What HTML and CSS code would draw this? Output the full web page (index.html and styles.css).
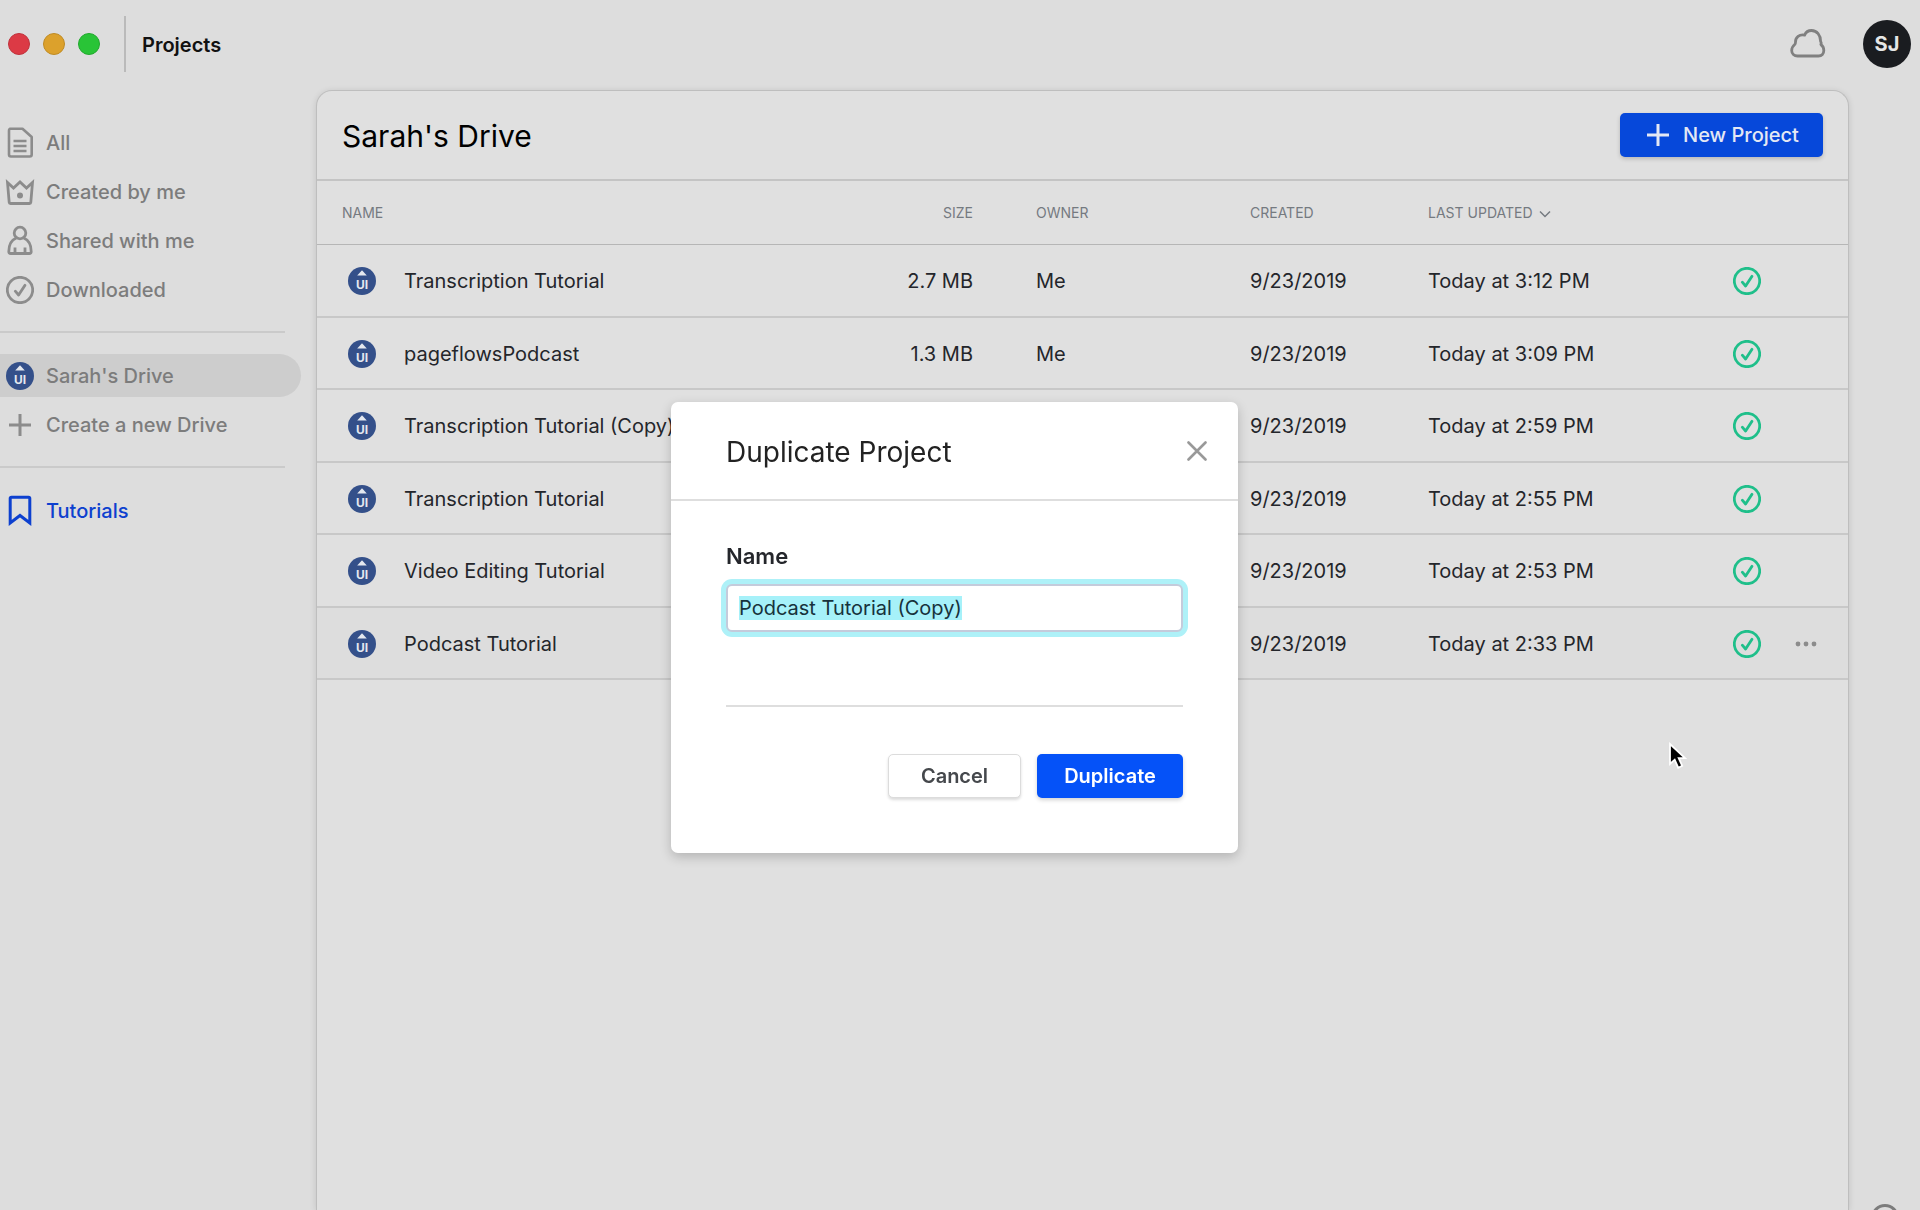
FILE: index.html
```html
<!DOCTYPE html>
<html lang="en">
<head>
<meta charset="utf-8">
<title>Projects</title>
<meta name="viewport" content="width=device-width, initial-scale=1">
<link rel="stylesheet" href="styles.css">
</head>
<body>
<svg class="sprite" aria-hidden="true">
  <symbol id="logo" viewBox="0 0 28 28">
    <circle cx="14" cy="14" r="14" fill="#34508a"/>
    <path d="M14 3.2 18.8 8.600H9.200z" fill="#e4e8ef"/>
    <text x="14" y="21.500" text-anchor="middle" class="logo-text">UI</text>
  </symbol>
  <symbol id="check" viewBox="0 0 28 28">
    <circle cx="14" cy="14" r="12.700" fill="none" stroke="currentColor" stroke-width="2.800"/>
    <path d="M9.300 15.200 12.600 19 19 9.300" fill="none" stroke="currentColor" stroke-width="2.800" stroke-linecap="round" stroke-linejoin="round"/>
  </symbol>
  <symbol id="plus" viewBox="0 0 28 28">
    <path d="M14 3v22M3 14h22" fill="none" stroke="currentColor" stroke-width="3"/>
  </symbol>
</svg>

<header class="topbar">
  <div class="lights">
    <span class="light red"></span><span class="light amber"></span><span class="light green"></span>
  </div>
  <h1 class="crumb">Projects</h1>
  <svg class="cloud" viewBox="0 0 36 30" aria-hidden="true"><path d="M7.500 27h21c3.300 0 5.300-2.300 5.300-5.500 0-2.600-1-4.600-2.900-6 .5-1 .4-2.200-.3-3.300C30.600 6 27 1.500 21.500 1.500c-3.200 0-5.700 1.700-6.900 4.600C9.500 5 5.300 8.500 5.500 13c0 1-.1 1.700-.6 2.300C2.900 17 1.700 18.900 1.700 21.500 1.700 24.700 4.200 27 7.500 27z" fill="none" stroke="currentColor" stroke-width="2.800" stroke-linejoin="round"/></svg>
  <button class="avatar" type="button">SJ</button>
</header>

<div class="layout">
  <nav class="sidebar">
    <a class="item" href="#"><svg class="icon" viewBox="0 0 28 28"><path d="M4 -.3h12.500L25.700 8v17.500q0 2-2 2H5q-2 0-2-2V1.700q0-2 2-2zM7.500 12h13M7.500 17h13M7.500 22h13" fill="none" stroke="currentColor" stroke-width="2.600" stroke-linejoin="round"/></svg>All</a>
    <a class="item" href="#"><svg class="icon" viewBox="0 0 28 28"><path d="M1.500 4.500 3.200 24.300q.1 1.200 1.300 1.200h19q1.200 0 1.300-1.200L26.500 4.500l-6 5.500L14 4l-6.500 6z" fill="none" stroke="currentColor" stroke-width="2.800"/><circle cx="14" cy="17.500" r="3" fill="currentColor"/></svg>Created by me</a>
    <a class="item" href="#"><svg class="icon" viewBox="0 0 28 28"><circle cx="14" cy="6" r="5.800" fill="none" stroke="currentColor" stroke-width="2.800"/><path d="M10.300 11C5.500 13 2.800 17 2.800 24.500q0 2 2 2h18.400q2 0 2-2c0-7.500-2.700-11.500-7.500-13.500M9 26.500v-6M19 26.500v-6" fill="none" stroke="currentColor" stroke-width="2.800"/></svg>Shared with me</a>
    <a class="item" href="#"><svg class="icon"><use href="#check"/></svg>Downloaded</a>
    <hr class="rule">
    <a class="item active" href="#"><svg class="icon"><use href="#logo"/></svg>Sarah's Drive</a>
    <a class="item" href="#"><svg class="icon"><use href="#plus"/></svg>Create a new Drive</a>
    <hr class="rule">
    <a class="item tutorials" href="#"><svg class="icon" viewBox="0 0 28 28"><path d="M4.200 26V1.500q0-1.300 1.300-1.300h17q1.300 0 1.300 1.300V26L14 18.500z" fill="none" stroke="currentColor" stroke-width="3"/></svg>Tutorials</a>
  </nav>

  <main class="panel">
    <div class="panel-head">
      <h2 class="panel-title">Sarah's Drive</h2>
      <button class="btn primary new" type="button"><svg class="icon"><use href="#plus"/></svg>New Project</button>
    </div>
    <table class="files">
      <colgroup><col><col class="c-size"><col class="c-owner"><col class="c-created"><col class="c-updated"><col class="c-status"><col class="c-more"></colgroup>
      <thead>
        <tr><th>NAME</th><th class="num">SIZE</th><th>OWNER</th><th>CREATED</th><th>LAST UPDATED <svg class="chevron" viewBox="0 0 12 8" aria-hidden="true"><path d="M1 1.500 6 6.500 11 1.500" fill="none" stroke="currentColor" stroke-width="1.500"/></svg></th><th></th><th></th></tr>
      </thead>
      <tbody>
        <tr><td><div class="name"><svg class="icon"><use href="#logo"/></svg>Transcription Tutorial</div></td><td class="num">2.7 MB</td><td>Me</td><td>9/23/2019</td><td>Today at 3:12 PM</td><td class="status"><svg class="icon"><use href="#check"/></svg></td><td></td></tr>
        <tr><td><div class="name"><svg class="icon"><use href="#logo"/></svg>pageflowsPodcast</div></td><td class="num">1.3 MB</td><td>Me</td><td>9/23/2019</td><td>Today at 3:09 PM</td><td class="status"><svg class="icon"><use href="#check"/></svg></td><td></td></tr>
        <tr><td><div class="name"><svg class="icon"><use href="#logo"/></svg>Transcription Tutorial (Copy)</div></td><td></td><td></td><td>9/23/2019</td><td>Today at 2:59 PM</td><td class="status"><svg class="icon"><use href="#check"/></svg></td><td></td></tr>
        <tr><td><div class="name"><svg class="icon"><use href="#logo"/></svg>Transcription Tutorial</div></td><td></td><td></td><td>9/23/2019</td><td>Today at 2:55 PM</td><td class="status"><svg class="icon"><use href="#check"/></svg></td><td></td></tr>
        <tr><td><div class="name"><svg class="icon"><use href="#logo"/></svg>Video Editing Tutorial</div></td><td></td><td></td><td>9/23/2019</td><td>Today at 2:53 PM</td><td class="status"><svg class="icon"><use href="#check"/></svg></td><td></td></tr>
        <tr class="hovered"><td><div class="name"><svg class="icon"><use href="#logo"/></svg>Podcast Tutorial</div></td><td></td><td></td><td>9/23/2019</td><td>Today at 2:33 PM</td><td class="status"><svg class="icon"><use href="#check"/></svg></td><td class="more-cell"><button class="more" type="button" aria-label="More"><svg viewBox="0 0 22 6" width="22" height="6"><circle cx="3" cy="3" r="2.400"/><circle cx="11" cy="3" r="2.400"/><circle cx="19" cy="3" r="2.400"/></svg></button></td></tr>
      </tbody>
    </table>
  </main>
</div>

<button class="help" type="button" aria-label="Help"></button>

<div class="overlay">
  <form class="modal" role="dialog" aria-labelledby="modal-title">
    <div class="modal-head">
      <h2 class="modal-title" id="modal-title">Duplicate Project</h2>
      <button class="close" type="button" aria-label="Close"><svg viewBox="0 0 20 20" width="20" height="20"><path d="M1.500 1.500l17 17M18.500 1.500l-17 17" stroke="currentColor" stroke-width="2.600" stroke-linecap="round"/></svg></button>
    </div>
    <div class="modal-body">
      <label class="label" for="project-name">Name</label>
      <input class="field" id="project-name" type="text" value="Podcast Tutorial (Copy)" autocomplete="off" spellcheck="false">
      <div class="actions">
        <button class="btn secondary" type="button">Cancel</button>
        <button class="btn primary" type="button">Duplicate</button>
      </div>
    </div>
  </form>
</div>

<svg class="cursor" viewBox="0 0 20 30" aria-hidden="true"><path d="M2 2v20l4.700-4.300 3.500 8 4-1.800-3.500-7.700H17z" fill="#000" stroke="#fff" stroke-width="1.800"/></svg>
<script src="app.js"></script>
</body>
</html>
```
FILE: styles.css
```css
* { box-sizing: border-box; }

body {
  margin: 0;
  min-height: 100vh;
  display: flex;
  flex-direction: column;
  background: #ddd;
  color: #24262b;
  font: 400 20px/24px Inter, "Liberation Sans", sans-serif;
  overflow: hidden;
}

h1, h2 { margin: 0; }
button { font: inherit; cursor: pointer; }
.sprite { display: none; }
.logo-text { font: 700 12px Inter, sans-serif; fill: #e4e8ef; }
.icon { width: 28px; height: 28px; flex: none; overflow: visible; display: block; }

.topbar {
  display: flex;
  align-items: center;
  height: 88px;
  padding: 0 9px 0 8px;
}
.lights {
  display: flex;
  align-items: center;
  gap: 13px;
  height: 56px;
  padding-right: 24px;
  border-right: 2px solid #bababa;
}
.light { width: 22px; height: 22px; border-radius: 50%; border: 1px solid; }
.red { background: #dc3a45; border-color: #c0323c; }
.amber { background: #dca12c; border-color: #bf8b24; }
.green { background: #29c437; border-color: #22a92e; }
.crumb { margin-left: 16px; padding-top: 2px; font-size: 20px; line-height: 24px; font-weight: 600; color: #111; }
.cloud { width: 36px; height: 30px; margin-left: auto; color: #808080; }
.avatar {
  width: 48px;
  height: 48px;
  margin-left: 37px;
  padding: 0;
  border: 0;
  border-radius: 50%;
  background: #1a1c20;
  color: #e6e6e6;
  font-weight: 700;
}

.layout { flex: 1; display: flex; padding: 2px 71px 0 0; }
.sidebar {
  width: 316px;
  flex: none;
  display: flex;
  flex-direction: column;
  gap: 6px;
  padding-top: 31px;
}
.item {
  display: flex;
  align-items: center;
  gap: 12px;
  height: 43px;
  margin-right: 15px;
  padding-left: 6px;
  border-radius: 0 22px 22px 0;
  color: #7c7c7c;
  font-weight: 500;
  text-decoration: none;
}
.item .icon { color: #8c8c8c; }
.active { background: #cdcdcd; }
.tutorials, .tutorials .icon { color: #0d40cf; }
.rule { width: 285px; height: 2px; margin: 14px 0 15px; border: 0; background: #cacaca; }

.panel {
  flex: 1;
  background: #e0e0e0;
  border: 1px solid #bebebe;
  border-bottom: 0;
  border-radius: 16px 16px 0 0;
  box-shadow: 0 1px 6px rgba(0, 0, 0, .12);
}
.panel-head {
  display: flex;
  justify-content: space-between;
  align-items: center;
  height: 90px;
  padding: 0 25px;
  border-bottom: 2px solid #c4c4c4;
}
.panel-title { padding-top: 2px; font-size: 30px; line-height: 40px; font-weight: 400; color: #000; }

.btn {
  height: 44px;
  border-radius: 5px;
  font-weight: 600;
  font-size: 20px;
  line-height: 24px;
  border: 0;
}
.primary { background: #0552f8; color: #fff; box-shadow: 0 2px 4px rgba(0, 0, 0, .18); }
.new {
  display: flex;
  align-items: center;
  justify-content: center;
  gap: 11px;
  width: 203px;
  padding: 0;
  background: #0648da;
  color: #e4e8f4;
  font-weight: 500;
}

.files { width: 100%; height: 499px; border-collapse: separate; border-spacing: 0; table-layout: fixed; }
.c-size { width: 150px; }
.c-owner { width: 214px; }
.c-created { width: 178px; }
.c-updated { width: 304px; }
.c-status { width: 80px; }
.c-more { width: 61px; }
th {
  height: 64px;
  padding: 0 25px;
  border-bottom: 1px solid #b6b6b6;
  text-align: left;
  white-space: nowrap;
  font-size: 14px;
  line-height: 20px;
  font-weight: 400;
  color: #757a80;
}
td { height: 72px; padding: 2px 25px 0; border-bottom: 2px solid #c8c8c8; white-space: nowrap; }
.num { text-align: right; padding-right: 38px; }
.name { display: flex; align-items: center; gap: 28px; padding-left: 6px; }
.chevron { width: 12px; height: 8px; margin-left: 3px; }
.status { padding: 2px 26px 0; color: #1fbf8a; }
.hovered td { background: #ddd; }
.more-cell { padding: 2px 8px 0; }
.more { display: flex; padding: 4px 0; border: 0; background: none; fill: #8c8c8c; }

.help {
  position: fixed;
  right: 21px;
  bottom: -22px;
  width: 28px;
  height: 28px;
  border: 3px solid #7c7c7c;
  border-radius: 50%;
  background: none;
}

.overlay {
  position: fixed;
  inset: 0;
  display: flex;
  align-items: center;
  justify-content: center;
  padding: 45px 11px 0 0;
}
.modal {
  width: 567px;
  border-radius: 7px;
  background: #fff;
  box-shadow: 0 4px 12px rgba(0, 0, 0, .2);
}
.modal-head {
  display: flex;
  align-items: center;
  justify-content: space-between;
  height: 99px;
  padding: 0 31px 0 55px;
  border-bottom: 2px solid #dedede;
}
.modal-title { padding-top: 2px; font-size: 28px; line-height: 36px; font-weight: 400; color: #222; }
.close { display: flex; padding: 0; border: 0; background: none; color: #999; }
.modal-body { padding: 39px 55px 55px; }
.label { display: block; font-size: 22px; line-height: 32px; font-weight: 600; }
.field {
  display: block;
  width: 100%;
  height: 48px;
  margin-top: 12px;
  padding: 0 11px;
  border: 2px solid #c4cbdb;
  border-radius: 6px;
  outline: none;
  font: inherit;
  color: #17323c;
  background: #fff;
  box-shadow: 0 0 0 5px #aef1f8;
}
.field::selection { background: #a6f1f9; color: #17323c; }
.actions {
  display: flex;
  justify-content: flex-end;
  gap: 16px;
  margin-top: 73px;
  padding-top: 47px;
  border-top: 2px solid #dedede;
}
.actions .primary { width: 146px; padding: 0; }
.secondary {
  width: 133px;
  padding: 0;
  background: #fff;
  color: #45484c;
  border: 1px solid #dcdcdc;
  box-shadow: 0 2px 3px rgba(0, 0, 0, .14);
}

.cursor { position: absolute; left: 1668px; top: 742px; width: 20px; height: 30px; }
```
FILE: app.js
```js
const field = document.getElementById('project-name');
field.focus();
field.select();
```
